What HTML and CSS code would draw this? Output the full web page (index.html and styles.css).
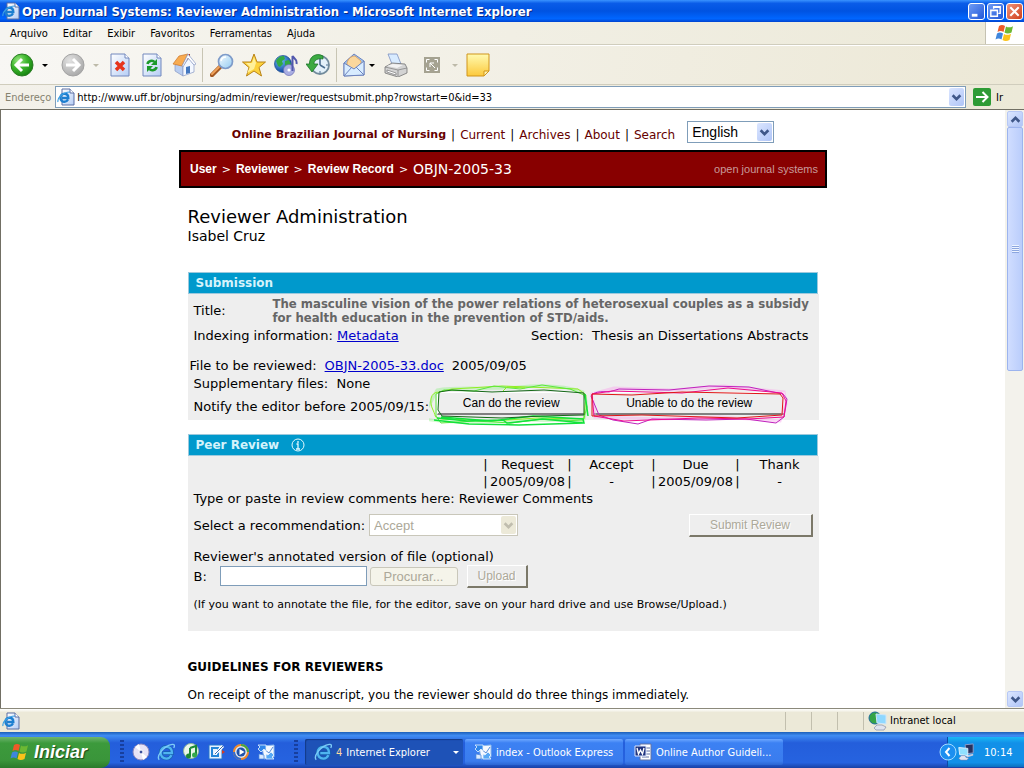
FILE: index.html
```html
<!DOCTYPE html>
<html lang="pt-BR">
<head>
    <meta charset="UTF-8">
    <meta name="viewport" content="width=device-width, initial-scale=1.0">
    <title>Open Journal Systems: Reviewer Administration</title>
    <link rel="stylesheet" href="styles.css">
</head>
<body>
    <!-- Shared icons -->
    <svg class="sprite" width="0" height="0" aria-hidden="true">
        <defs>
            <radialGradient id="gGreen" cx="35%" cy="30%" r="75%"><stop offset="0" stop-color="#9be884"/><stop offset=".5" stop-color="#3cb52c"/><stop offset="1" stop-color="#14800f"/></radialGradient>
            <radialGradient id="gGrey" cx="35%" cy="30%" r="75%"><stop offset="0" stop-color="#e2e2e2"/><stop offset="1" stop-color="#a8a8a8"/></radialGradient>
            <radialGradient id="gGlobe" cx="35%" cy="30%" r="75%"><stop offset="0" stop-color="#6ec3f5"/><stop offset="1" stop-color="#0b3b9b"/></radialGradient>
            <linearGradient id="gPage" x1="0" y1="0" x2="1" y2="1"><stop offset="0" stop-color="#ffffff"/><stop offset="1" stop-color="#b5cdf5"/></linearGradient>
            <linearGradient id="gNote" x1="0" y1="0" x2="0" y2="1"><stop offset="0" stop-color="#fffab0"/><stop offset="1" stop-color="#fcc93c"/></linearGradient>
            <linearGradient id="gLens" x1="0" y1="0" x2="1" y2="1"><stop offset="0" stop-color="#f6fcff"/><stop offset="1" stop-color="#93cbf2"/></linearGradient>
        </defs>
        <symbol id="flag" viewBox="0 0 20 20">
            <path d="M4 3c2-1.500 4-1.500 6 0L8.500 9c-2-1.300-4-1.300-6 0z" fill="#ee5a28"/>
            <path d="M11 3.500c2 1.200 4.500 1.200 7-.3L16.500 9.500c-2.500 1.300-5 1.300-7 0z" fill="#6cb833"/>
            <path d="M2 10.500c2-1.500 4-1.500 6 0L6.500 16.500c-2-1.300-4-1.300-6 0z" fill="#3f86dd"/>
            <path d="M9 11c2 1.200 4.500 1.200 7-.3L14.500 17c-2.500 1.300-5 1.300-7 0z" fill="#fbc31a"/>
        </symbol>
        <symbol id="e-logo" viewBox="0 0 20 20">
            <path d="M16 13.500c-1 2.500-3 3.800-5.600 3.800-4 0-6.400-2.900-6.400-6.500s2.600-6.500 6.400-6.500c4 0 6.200 2.800 6.200 6.900H7" fill="none" stroke="#155fae" stroke-width="4"/>
            <path d="M16 13.500c-1 2.500-3 3.800-5.600 3.800-4 0-6.400-2.900-6.400-6.500s2.600-6.500 6.400-6.500c4 0 6.200 2.800 6.200 6.900H7" fill="none" stroke="#4fb4f0" stroke-width="2.600"/>
            <path d="M2.500 18.500C-1 15 7 3 17 1.500c3-.4 2.800 2 1.500 4" fill="none" stroke="#7dcbf7" stroke-width="1.500"/>
        </symbol>
        <symbol id="ie-page" viewBox="0 0 18 18">
            <path d="M5 1h8l4 4v12H5z" fill="url(#gPage)" stroke="#5b6fa3"/>
            <path d="M13 1v4h4" fill="#fff" stroke="#5b6fa3"/>
            <path d="M11 11.500c-.8 1.500-2 2.300-3.500 2.300-2.500 0-4-1.700-4-4s1.500-4 3.800-4c2.500 0 4 1.700 4 4.200H5" fill="none" stroke="#1d7fd0" stroke-width="2.400"/>
            <path d="M1 14C0 10 6 4 13 4" fill="none" stroke="#3ba0e4" stroke-width="1.200"/>
        </symbol>
        <symbol id="outlook" viewBox="0 0 18 18">
            <path d="M5 3l12-1v12l-10 2z" fill="#f5f9ff" stroke="#8db9ec"/>
            <path d="M7 6l5 4 4-6" fill="none" stroke="#5b8fd8"/>
            <path d="M1 2h8v6l-2-2-3 3-3-3 2-2z" fill="#2f86ea" stroke="#e6f3ff" stroke-width=".8"/>
            <path d="M17 16H9v-5l2 1 3-3 3 3-2 2z" fill="#57a8f5" stroke="#e6f3ff" stroke-width=".8"/>
            <path d="M2 11l5 1v4H2z" fill="#dbeaff" stroke="#4a86d8" stroke-width=".7"/>
        </symbol>
        <symbol id="chevron" viewBox="0 0 10 10">
            <path d="M1.500 3L5 6.500 8.500 3" fill="none" stroke="currentColor" stroke-width="2.400"/>
        </symbol>
        <symbol id="chevron-up" viewBox="0 0 10 10">
            <path d="M1.500 7L5 3.500 8.500 7" fill="none" stroke="currentColor" stroke-width="2.400"/>
        </symbol>
        <symbol id="monitors" viewBox="0 0 20 20">
            <path d="M9 2l9-1v10l-8 1z" fill="#26315e" stroke="#93a3cf"/>
            <path d="M10 14l8-2v2l-7 2z" fill="#c3cbe0"/>
            <path d="M2 5l10 1v8L3 13z" fill="#8fe0ff" stroke="#e8f4ff"/>
            <path d="M5 14h4l1 2 3 1-2 2H4l-2-2z" fill="#dfe4f2" stroke="#7482ac" stroke-width=".6"/>
        </symbol>
    </svg>

    <header class="title-bar">
        <svg class="icon-18"><use href="#ie-page"/></svg>
        <h1>Open Journal Systems: Reviewer Administration - Microsoft Internet Explorer</h1>
        <button class="win-btn" aria-label="Minimizar"><svg viewBox="0 0 16 16"><path d="M3 12h6" stroke="#fff" stroke-width="3"/></svg></button>
        <button class="win-btn" aria-label="Restaurar"><svg viewBox="0 0 16 16"><path d="M6 5V3h7v7h-2M3 6.500h7V13H3zM3 7h7M6 3.500h7" fill="none" stroke="#fff" stroke-width="1.500"/></svg></button>
        <button class="win-btn close" aria-label="Fechar"><svg viewBox="0 0 16 16"><path d="M3.500 3.500l9 9M12.500 3.500l-9 9" stroke="#fff" stroke-width="2.200"/></svg></button>
    </header>

    <nav class="menu-bar">
        <button>Arquivo</button>
        <button>Editar</button>
        <button>Exibir</button>
        <button>Favoritos</button>
        <button>Ferramentas</button>
        <button>Ajuda</button>
        <span class="brand"><svg><use href="#flag"/></svg></span>
    </nav>

    <!-- Toolbar -->
    <div class="toolbar">
        <button class="tool" aria-label="Voltar"><svg viewBox="0 0 24 24"><circle cx="12" cy="12" r="11" fill="url(#gGreen)" stroke="#2c7d26"/><path d="M19 12H7M12 6l-6 6 6 6" fill="none" stroke="#fff" stroke-width="3"/></svg></button>
        <span class="drop"></span>
        <button class="tool forward" aria-label="Avançar" disabled><svg viewBox="0 0 24 24"><circle cx="12" cy="12" r="11" fill="url(#gGrey)" stroke="#a3a3a3"/><path d="M5 12h12M12 6l6 6-6 6" fill="none" stroke="#fff" stroke-width="3"/></svg></button>
        <span class="drop off"></span>
        <button class="tool stop" aria-label="Parar"><svg viewBox="0 0 24 24"><path d="M3 1h14l4 4v18H3z" fill="url(#gPage)" stroke="#7388bd"/><path d="M17 1v4h4" fill="#fff" stroke="#7388bd"/><path d="M8 9l8 8M16 9l-8 8" stroke="#e6341c" stroke-width="3.500"/></svg></button>
        <button class="tool" aria-label="Atualizar"><svg viewBox="0 0 24 24"><path d="M3 1h14l4 4v18H3z" fill="url(#gPage)" stroke="#7388bd"/><path d="M17 1v4h4" fill="#fff" stroke="#7388bd"/><path d="M7.500 11c.5-3 5-4.500 7-2" fill="none" stroke="#1c9a2b" stroke-width="2.600"/><path d="M17 6v6h-6z" fill="#1c9a2b"/><path d="M16.500 14c-.5 3-5 4.500-7 2" fill="none" stroke="#1c9a2b" stroke-width="2.600"/><path d="M7 19v-6h6z" fill="#1c9a2b"/></svg></button>
        <button class="tool" aria-label="Página inicial"><svg viewBox="0 0 24 24"><path d="M15 1h3v6h-3z" fill="#b33b2c"/><path d="M3 12l8-4v15l-8-5z" fill="#b9cdf0" stroke="#8798c4" stroke-width=".7"/><path d="M11 13l6-8 5 7v7l-11 4z" fill="#f4f8ff" stroke="#8798c4" stroke-width=".7"/><path d="M1 11L7 3l9-2-6 12z" fill="#f8ab50" stroke="#c9742a" stroke-width=".7"/><path d="M16 1l8 10-2 1-6-7-5 9-1-1z" fill="#fff" stroke="#8798c4" stroke-width=".7"/><path d="M14 14l4-1v7l-4 1z" fill="#4478c0"/></svg></button>
        <span class="sep"></span>
        <button class="tool" aria-label="Pesquisar"><svg viewBox="0 0 24 24"><path d="M2 22l8-8" stroke="#a45a25" stroke-width="4.500" stroke-linecap="round"/><path d="M2 21l7-7" stroke="#f1a35c" stroke-width="2" stroke-linecap="round"/><circle cx="15.500" cy="8.500" r="7" fill="url(#gLens)" stroke="#7e9bc9" stroke-width="1.700"/><path d="M11 8c.5-2.500 2.500-4 5-4" fill="none" stroke="#fff" stroke-width="1.500"/></svg></button>
        <button class="tool" aria-label="Favoritos"><svg viewBox="0 0 24 24"><path d="M12 1l3 8h8.500l-6.500 5.500L19.500 23 12 18l-7.500 5L7 14.500.5 9H9z" fill="#fdd23c" stroke="#b98318"/><path d="M12 4l2 6-2 6-7 4 3-6-4-4h6z" fill="#fff09a"/></svg></button>
        <button class="tool" aria-label="Mídia"><svg viewBox="0 0 24 24"><circle cx="9" cy="11" r="8.500" fill="url(#gGlobe)" stroke="#174a8f" stroke-width=".7"/><path d="M2 8c2-4 5-5 8-5l1 3-3 2 1 3-3 3-2-1zM11 8l4-1 2 4-3 5-3-2z" fill="#32a944"/><circle cx="15" cy="17" r="5.500" fill="#a9aee2" stroke="#6a6db3" stroke-width=".7"/><circle cx="15" cy="17" r="1.600" fill="#fff"/><path d="M18.500 18V3c1 2 5 3 4 8" fill="none" stroke="#5258ad" stroke-width="2"/></svg></button>
        <button class="tool" aria-label="Histórico"><svg viewBox="0 0 24 24"><circle cx="14" cy="12" r="9" fill="#e4f1fa" stroke="#728b9c" stroke-width="1.800"/><path d="M14 12V5M14 12l5 3" stroke="#4b6d8f" stroke-width="1.600"/><path d="M14 18v2M20 12h2" stroke="#4b6d8f"/><path d="M17 3C10-1 3 4 3.500 11H0l6 8 6-8H8c0-4 4-6 9-5z" fill="#3caa42" stroke="#1c7328" stroke-width=".8"/></svg></button>
        <span class="sep"></span>
        <button class="tool mail" aria-label="Correio"><svg viewBox="0 0 24 24"><path d="M2 10L12 1l10 7v14L2 23z" fill="#9dc6f4" stroke="#6d83bd"/><path d="M5 10c1-4 4-7 8-7l6 5v5l-7 4-7-5z" fill="#fbd79c" stroke="#d99b55" stroke-width=".8"/><path d="M2 10l10 6L22 8v14L2 23z" fill="#d8ecff" stroke="#6d83bd"/><path d="M2 23l8-9M22 22l-8-8" stroke="#6d83bd"/></svg></button>
        <span class="drop tight"></span>
        <button class="tool print" aria-label="Imprimir"><svg viewBox="0 0 24 24"><path d="M4 1h9l4 10H8z" fill="#d8ebff" stroke="#7c91c0" stroke-width=".8"/><path d="M1 14l7-4 13 1 2 4v5l-9 4-13-4z" fill="#d3d3d3" stroke="#747474" stroke-width=".8"/><path d="M1 14l13 3 9-2M14 17v6" fill="none" stroke="#858585" stroke-width=".8"/><path d="M3 13l6-2 10 1-6 3z" fill="#f3f3f3"/><path d="M3 17l9 3v2l-9-3z" fill="#fff" stroke="#666" stroke-width=".6"/></svg></button>
        <button class="tool resize" aria-label="Tamanho" disabled><svg viewBox="0 0 24 24"><path d="M4 4h16v16H4z" fill="#a5a291"/><path d="M6.500 9.500v-3h3M14.500 6.500h3v3M17.500 14.500v3h-3M9.500 17.500h-3v-3M10 14v-4h4M10 10l5 5" fill="none" stroke="#fff"/></svg></button>
        <span class="drop off"></span>
        <button class="tool" aria-label="Discussão"><svg viewBox="0 0 24 24"><path d="M1 1h22v17l-5 5H1z" fill="url(#gNote)" stroke="#d0951b"/><path d="M18 23v-5h5z" fill="#fff3b0" stroke="#d0951b"/></svg></button>
    </div>

    <form class="address-bar">
        <label for="url">Endereço</label>
        <div class="address-box">
            <svg class="icon-18"><use href="#ie-page"/></svg>
            <input id="url" type="text" value="http://www.uff.br/objnursing/admin/reviewer/requestsubmit.php?rowstart=0&amp;id=33">
            <button type="button" class="xp-arrow" aria-label="Abrir lista"><svg><use href="#chevron"/></svg></button>
        </div>
        <button type="button" class="go"><svg viewBox="0 0 18 18"><path d="M0 0h18v18H0z" fill="#2d9b35"/><path d="M3 9h11M9.500 4l5 5-5 5" fill="none" stroke="#fff" stroke-width="2"/></svg>Ir</button>
    </form>

    <div class="viewport">
        <main class="page">
            <nav class="site-nav">
                <a class="journal" href="#">Online Brazilian Journal of Nursing</a>
                <span>|</span><a href="#">Current</a>
                <span>|</span><a href="#">Archives</a>
                <span>|</span><a href="#">About</a>
                <span>|</span><a href="#">Search</a>
                <div class="select-box language">
                    <select aria-label="Language"><option>English</option></select>
                    <span class="xp-arrow"><svg><use href="#chevron"/></svg></span>
                </div>
            </nav>

            <div class="breadcrumb">
                <a href="#">User</a><span>&gt;</span>
                <a href="#">Reviewer</a><span>&gt;</span>
                <a href="#">Review Record</a><span>&gt;</span>
                <span class="current">OBJN-2005-33</span>
                <a class="ojs" href="#">open journal systems</a>
            </div>

            <div class="content">
                <h2>Reviewer Administration</h2>
                <p class="user-name">Isabel Cruz</p>

                <section class="panel submission">
                    <h3>Submission</h3>
                    <div class="panel-body">
                        <div class="row title-row">
                            <span>Title:</span>
                            <strong>The masculine vision of the power relations of heterosexual couples as a subsidy for health education in the prevention of STD/aids.</strong>
                        </div>
                        <div class="row index-row">
                            <span>Indexing information: <a href="#">Metadata</a></span>
                            <span>Section:&nbsp; Thesis an Dissertations Abstracts</span>
                        </div>
                        <div class="row file-row">
                            <span>File to be reviewed:</span>
                            <a href="#">OBJN-2005-33.doc</a>
                            <span>2005/09/05</span>
                        </div>
                        <div class="row">Supplementary files:&nbsp; None</div>
                        <div class="row notify-row">
                            <span>Notify the editor before 2005/09/15:</span>
                            <div class="marked can">
                                <button>Can do the review</button>
                                <svg class="scribble" viewBox="0 0 160 42" preserveAspectRatio="none" fill="none">
                                    <path d="M8 6C30 2 60 6 90 3s50 0 64 5c5 8 3 18 1 27-30 3-60 0-90 2s-50 2-76-3C2 24 4 12 8 6z" stroke="#7fef6f" stroke-width="3" opacity=".35"/>
                                    <path d="M10 8C1 8 0 18 4 26s0 8 10 9l50 2 44-3 47 1 2-24-8-6-50-2-26-1-50 3z" stroke="#8fee22"/>
                                    <path d="M7 10l8-4 30 1 20-5 26 3 22-4 28 4 14 6 3 12-4 14-40-2-32 4-36-2-34 2-5-7z" stroke="#5be83c"/>
                                    <path d="M8 34l30 3 36-1 4 3 35-4 42 4-1-4-50-3-42 5-50-4M156 10l3 22M5 36l35 4 50 1 65-2" stroke="#12e23b" stroke-width="1.500"/>
                                    <path d="M10 8l-1 18 4 6 60 2 40-2 42-1V9l-40-3-52 2-40-2z" stroke="#156818"/>
                                    <path d="M74 7l4-4 18 1" stroke="#8fee22"/>
                                </svg>
                            </div>
                            <div class="marked unable">
                                <button>Unable to do the review</button>
                                <svg class="scribble" viewBox="0 0 200 42" preserveAspectRatio="none" fill="none">
                                    <path d="M3 10L25 4l60 2 50-4 60 6 2 12-6 17-60-4-60 2-65-2z" stroke="#f8a5ec" stroke-width="3" opacity=".45"/>
                                    <path d="M2 12c2-4 10-5 18-4L30 5l50 1 40-4 40 1 34 7 4 5-3 18-8 6-30-4-40 1-54-1-14 5-25-4-14-5z" stroke="#bf22bd"/>
                                    <path d="M3 10l20-3 70 2 46-5 54 5 4 8-2 16-36 2-50-1-74 3-30-5z" stroke="#f00a8f"/>
                                    <path d="M3 10l40 1 50-3 98 2 3 4-1 17-45 3-95-3-50 1z" stroke="#e01616"/>
                                </svg>
                            </div>
                        </div>
                    </div>
                </section>

                <section class="panel review">
                    <h3>Peer Review <svg class="info" viewBox="0 0 14 14"><circle cx="7" cy="7" r="6" fill="none" stroke="#e3f9ff"/><path d="M7 3v2M5.500 6H7v5M5 11h4" fill="none" stroke="#e3f9ff" stroke-width="1.300"/></svg></h3>
                    <div class="panel-body">
                        <table class="dates">
                            <tr><td>|</td><th>Request</th><td>|</td><th>Accept</th><td>|</td><th>Due</th><td>|</td><th>Thank</th></tr>
                            <tr><td>|</td><td>2005/09/08</td><td>|</td><td>-</td><td>|</td><td>2005/09/08</td><td>|</td><td>-</td></tr>
                        </table>
                        <p class="comments">Type or paste in review comments here: Reviewer Comments</p>
                        <div class="row recommend-row">
                            <label for="recommendation">Select a recommendation:</label>
                            <div class="select-box disabled">
                                <select id="recommendation" disabled><option>Accept</option></select>
                                <span class="xp-arrow"><svg><use href="#chevron"/></svg></span>
                            </div>
                            <button class="classic submit" disabled>Submit Review</button>
                        </div>
                        <p class="annotated">Reviewer's annotated version of file (optional)</p>
                        <div class="row upload-row">
                            <label for="file">B:</label>
                            <input id="file" type="text">
                            <button class="browse" disabled>Procurar...</button>
                            <button class="classic upload" disabled>Upload</button>
                        </div>
                        <p class="hint">(If you want to annotate the file, for the editor, save on your hard drive and use Browse/Upload.)</p>
                    </div>
                </section>

                <h4>GUIDELINES FOR REVIEWERS</h4>
                <p class="guideline">On receipt of the manuscript, you the reviewer should do three things immediately.</p>
            </div>
        </main>

        <div class="scrollbar">
            <button class="xp-arrow" aria-label="Rolar para cima"><svg><use href="#chevron-up"/></svg></button>
            <div class="thumb"><i></i></div>
            <button class="xp-arrow" aria-label="Rolar para baixo"><svg><use href="#chevron"/></svg></button>
        </div>
    </div>

    <div class="status-bar">
        <svg class="icon-18"><use href="#ie-page"/></svg>
        <span class="cell first"></span>
        <span class="cell"></span>
        <span class="cell"></span>
        <span class="cell"></span>
        <span class="zone">
            <svg viewBox="0 0 20 20"><circle cx="7" cy="7" r="6" fill="#35a348" stroke="#1d6a9c"/><path d="M8 3l10 1v9l-9-1z" fill="#8fd8ff" stroke="#cfe6f7"/><path d="M9 14h5l4 2-2 3H8l-2-2z" fill="#dfe3ee" stroke="#77809c" stroke-width=".6"/></svg>
            Intranet local
        </span>
    </div>

    <!-- Taskbar -->
    <footer class="taskbar">
        <button class="start"><svg><use href="#flag"/></svg>Iniciar</button>
        <i class="grip"></i>
        <div class="quick">
            <svg viewBox="0 0 18 18"><circle cx="9" cy="9" r="8" fill="#e6e2f6" stroke="#8d88bd"/><path d="M9 9L3 4l4-3zM9 9l6 5-4 3z" fill="#fff"/><circle cx="9" cy="9" r="2" fill="#3a4f9c" stroke="#fff"/></svg>
            <svg><use href="#e-logo"/></svg>
            <svg viewBox="0 0 18 18"><circle cx="9" cy="8" r="7.500" fill="#eaf6ea" stroke="#8fb79b"/><path d="M8 5l6-2v9M8 5v8" fill="none" stroke="#1b8a36" stroke-width="2"/><circle cx="6.500" cy="13" r="2.500" fill="#1b8a36"/><circle cx="12.500" cy="12" r="2.500" fill="#35a84c"/></svg>
            <svg viewBox="0 0 18 18"><path d="M2 2h13v14H2z" fill="#e6f2ff" stroke="#2676c9"/><path d="M5 5h6v8H5z" fill="none" stroke="#2386d8" stroke-width="2"/><path d="M8 11l8-8" stroke="#fff" stroke-width="3"/><path d="M8 11l8-8" stroke="#376bb0"/><path d="M15 7l3 2-3 2z" fill="#d83a20"/></svg>
            <svg viewBox="0 0 18 18"><circle cx="9" cy="9" r="7" fill="#dce9fb" stroke="#f08a2c" stroke-width="2"/><path d="M9 2a7 7 0 0 1 7 7" fill="none" stroke="#45a845" stroke-width="2"/><path d="M2 9a7 7 0 0 0 7 7" fill="none" stroke="#2f6ad0" stroke-width="2"/><circle cx="9" cy="9" r="4.500" fill="#1f51a8"/><path d="M7.500 6v6l5-3z" fill="#fff"/></svg>
            <svg><use href="#outlook"/></svg>
        </div>
        <i class="grip"></i>
        <div class="tasks">
            <button class="task active"><svg><use href="#e-logo"/></svg><b>4</b>Internet Explorer<span class="drop"></span></button>
            <button class="task"><svg><use href="#outlook"/></svg>index - Outlook Express</button>
            <button class="task"><svg viewBox="0 0 18 18"><path d="M6 1h11v16H6z" fill="#fff" stroke="#6172a5"/><path d="M12 5h4M12 8h4M12 11h4M8 14h7" stroke="#6172a5"/><path d="M1 3h11v10H1z" fill="#20347e" stroke="#dbe5ff"/><path d="M3 5l1.500 6L6.500 7l2 4L10 5" fill="none" stroke="#fff" stroke-width="1.400"/></svg>Online Author Guideli...</button>
        </div>
        <div class="tray">
            <button class="tray-toggle" aria-label="Mostrar ícones"><svg viewBox="0 0 18 18"><circle cx="9" cy="9" r="8" fill="#1c8ff0" stroke="#a4dcff"/><path d="M10.500 5L7 9l3.500 4" fill="none" stroke="#fff" stroke-width="2"/></svg></button>
            <svg class="net"><use href="#monitors"/></svg>
            <span>10:14</span>
        </div>
    </footer>
</body>
</html>
```
FILE: styles.css
```css
* {
    margin: 0;
    padding: 0;
    box-sizing: border-box;
}

body {
    display: flex;
    flex-direction: column;
    height: 100vh;
    overflow: hidden;
    background: #fff;
    color: #000;
    font-family: "DejaVu Sans", Verdana, sans-serif;
    font-size: 13px;
}

button {
    border: none;
    background: none;
    color: inherit;
    font: inherit;
}

svg {
    display: block;
    flex: none;
}

.sprite {
    position: absolute;
}

.icon-18 {
    width: 18px;
    height: 18px;
}

.title-bar,
.menu-bar,
.toolbar,
.address-bar,
.status-bar,
.taskbar {
    display: flex;
    align-items: center;
    flex: none;
    font-family: "DejaVu Sans Condensed", Tahoma, sans-serif;
    font-size: 11px;
}

/* Title bar */
.title-bar {
    height: 22px;
    padding: 0 1px 0 2px;
    gap: 2px;
    background: linear-gradient(#3a93ff, #0a5ce8 15%, #0053e1 50%, #0066ff 85%, #0043cf);
    color: #fff;
}

.title-bar h1 {
    flex: 1;
    font-size: 13px;
    text-shadow: 1px 1px #0a2a86;
    white-space: nowrap;
}

.win-btn {
    width: 17px;
    height: 17px;
    border: 1px solid #fff;
    border-radius: 3px;
    background: linear-gradient(135deg, #6f9cf5, #2157d8);
}

.win-btn.close {
    background: linear-gradient(135deg, #f0937a, #cf3f1b);
}

/* Menu bar */
.menu-bar {
    height: 23px;
    padding-left: 10px;
    gap: 15px;
    background: linear-gradient(90deg, #f6f5f0, #ece9d8);
    border-bottom: 1px solid #d0cdbd;
}

.brand {
    display: flex;
    align-items: center;
    justify-content: center;
    width: 39px;
    height: 22px;
    margin-left: auto;
    background: #fff;
    border-left: 1px solid #c5c2b2;
}

.brand svg {
    width: 20px;
    height: 20px;
}

/* Toolbar */
.toolbar {
    height: 40px;
    padding-left: 6px;
    background: linear-gradient(100deg, #f8f7f4, #ece8d6);
    border-top: 1px solid #fff;
    border-bottom: 1px solid #d0cdbd;
}

.tool {
    display: flex;
    justify-content: center;
    width: 32px;
}

.tool svg {
    width: 24px;
    height: 24px;
}

.tool.forward {
    margin-left: 5px;
}

.tool.stop {
    margin-left: 1px;
}

.tool.mail {
    width: 28px;
}

.tool.print {
    margin: 0 4px;
}

.drop {
    width: 14px;
}

.drop::before {
    content: "";
    display: block;
    width: 0;
    margin: 0 auto;
    border: 3px solid transparent;
    border-top-color: #000;
    border-bottom: none;
}

.drop.off::before {
    border-top-color: #bdbaa9;
}

.drop.tight {
    width: 8px;
}

.sep {
    width: 1px;
    height: 34px;
    margin: 0 3px 0 2px;
    background: #c8c5b4;
}

/* Address bar */
.address-bar {
    height: 24px;
    padding: 0 2px 0 5px;
    background: linear-gradient(90deg, #f3f1ea, #ece9d8);
}

.address-bar label {
    color: #85826f;
}

.address-box {
    display: flex;
    align-items: center;
    flex: 1;
    height: 22px;
    margin: 0 7px 0 4px;
    padding: 0 1px;
    background: #fff;
    border: 1px solid #7f9db9;
}

.address-box input {
    flex: 1;
    padding-left: 2px;
    border: none;
    outline: none;
    font: inherit;
}

.xp-arrow {
    display: flex;
    align-items: center;
    justify-content: center;
    width: 15px;
    height: 18px;
    border-radius: 2px;
    background: linear-gradient(135deg, #dbe6ff, #b0c5f7);
    color: #3f5788;
}

.xp-arrow svg {
    width: 11px;
    height: 11px;
}

.go {
    display: flex;
    align-items: center;
    gap: 5px;
    width: 49px;
}

.go svg {
    width: 18px;
    height: 18px;
    border-radius: 2px;
}

/* Viewport */
.viewport {
    display: flex;
    flex: 1;
    min-height: 0;
    border-top: 1px solid #716f64;
    border-left: 1px solid #716f64;
}

.page {
    flex: 1;
    overflow: hidden;
}

.page a {
    color: #0000cc;
}

.site-nav {
    display: flex;
    align-items: flex-end;
    justify-content: center;
    gap: 5px;
    padding: 11px 0 6px;
    font-size: 12px;
    line-height: 18px;
}

.site-nav a {
    color: #660000;
    text-decoration: none;
}

.site-nav .journal {
    font-size: 11px;
    font-weight: bold;
}

.select-box {
    position: relative;
    width: 149px;
    height: 22px;
}

.select-box.language {
    width: 87px;
    margin-left: 7px;
}

.site-nav .language {
    margin-bottom: 1px;
}

.select-box select {
    appearance: none;
    width: 100%;
    height: 100%;
    padding-left: 4px;
    border: 1px solid #7f9db9;
    border-radius: 0;
    background: #fff;
    color: #000;
    font-family: "Liberation Sans", Arial, sans-serif;
    font-size: 14px;
}

.select-box .xp-arrow {
    position: absolute;
    top: 2px;
    right: 2px;
    pointer-events: none;
}

.select-box.disabled select {
    border-color: #c9c7ba;
    color: #aca899;
    font-size: 13px;
    opacity: 1;
}

.select-box.disabled .xp-arrow {
    background: #ece9d8;
    color: #c0bdae;
}

.breadcrumb {
    display: flex;
    align-items: center;
    gap: 5px;
    max-width: 648px;
    height: 38px;
    margin: 0 auto;
    padding: 0 7px 0 9px;
    border: 2px solid #000;
    background: #880000;
    color: #fff;
    font-size: 11px;
}

.breadcrumb a {
    color: #fff;
    font-family: "Liberation Sans", Arial, sans-serif;
    font-size: 12px;
    font-weight: bold;
    text-decoration: none;
}

.breadcrumb .current {
    font-size: 14px;
}

.breadcrumb .ojs {
    margin-left: auto;
    color: #c89a9a;
    font-size: 11px;
    font-weight: normal;
}

.content {
    max-width: 631px;
    margin: 0 auto;
}

.content h2 {
    padding-top: 18px;
    font-size: 18px;
    font-weight: normal;
    line-height: 22px;
}

.user-name {
    margin-bottom: 28px;
    font-size: 14px;
    line-height: 16px;
}

/* Panels */
.panel {
    margin-bottom: 14px;
}

.panel h3 {
    display: flex;
    align-items: center;
    gap: 12px;
    height: 22px;
    margin-right: 1px;
    padding-left: 7px;
    border: 1px solid #9cc9dd;
    background: #0099cc;
    color: #d5f3fb;
    font-size: 12px;
}

.info {
    width: 14px;
    height: 14px;
}

.panel-body {
    padding: 0 4px 0 6px;
    background: #eee;
}

.row {
    display: flex;
    align-items: center;
    min-height: 18px;
}

.title-row {
    height: 32px;
    padding-top: 2px;
    line-height: 14px;
}

.title-row span {
    width: 79px;
}

.title-row strong {
    flex: 1;
    color: #666;
    font-family: "DejaVu Sans Condensed", Verdana, sans-serif;
}

.index-row {
    justify-content: space-between;
    padding-right: 6px;
}

.file-row {
    gap: 8px;
    margin: 12px 0 0 -4px;
}

.notify-row {
    height: 28px;
    gap: 8px;
}

.marked {
    position: relative;
    margin-bottom: 6px;
}

.marked button {
    width: 148px;
    height: 23px;
    border: 1px solid #fff;
    border-bottom: 2px solid #808080;
    background: #eee;
    font-family: "Liberation Sans", Arial, sans-serif;
    font-size: 12px;
}

.marked.unable button {
    width: 192px;
}

.scribble {
    position: absolute;
    top: -8px;
    left: -8px;
    width: 160px;
    height: 42px;
    pointer-events: none;
}

.unable .scribble {
    left: -4px;
    width: 200px;
}

.dates {
    margin: 0 -4px 0 auto;
    border-collapse: collapse;
}

.dates td,
.dates th {
    width: 6px;
    height: 17px;
    font-weight: normal;
    text-align: center;
}

.dates th {
    width: 78px;
}

.comments {
    line-height: 18px;
}

.recommend-row {
    height: 34px;
    gap: 4px;
}

.classic {
    border: 1px solid #fff;
    border-right: 2px solid #7b7869;
    border-bottom: 2px solid #7b7869;
    height: 23px;
    color: #aca899;
    font-family: "Liberation Sans", Arial, sans-serif;
    font-size: 12px;
    text-shadow: 1px 1px #fff;
}

.submit {
    width: 124px;
    margin: 0 2px 0 auto;
}

.annotated {
    padding-top: 6px;
    line-height: 18px;
}

.upload-row {
    height: 20px;
}

.upload-row label {
    width: 26px;
}

.upload-row input {
    width: 147px;
    height: 20px;
    border: 1px solid #7f9db9;
    background: #fff;
}

.browse {
    width: 88px;
    height: 19px;
    margin: 0 9px 0 3px;
    border: 1px solid #c9c7ba;
    border-radius: 3px;
    background: #f5f4ea;
    color: #aca899;
    font-family: "Liberation Sans", Arial, sans-serif;
    font-size: 13px;
}

.upload {
    width: 61px;
}

.hint {
    padding: 10px 0 17px;
    font-size: 11px;
    line-height: 18px;
}

.content h4 {
    padding-top: 13px;
    font-size: 12px;
    line-height: 18px;
}

.guideline {
    padding-top: 10px;
    font-size: 12px;
    line-height: 18px;
}

/* Scrollbar */
.scrollbar {
    display: flex;
    flex-direction: column;
    width: 19px;
    padding: 1px 1px 1px 2px;
    background: #f3f2ec;
}

.scrollbar .xp-arrow {
    width: 16px;
    height: 16px;
    border: 1px solid #b7c8f5;
}

.thumb {
    display: flex;
    align-items: center;
    justify-content: center;
    height: 41%;
    margin-bottom: auto;
    border: 1px solid #9cb4ee;
    border-radius: 2px;
    background: linear-gradient(90deg, #d0ddff, #bacdfb);
}

.thumb i {
    width: 7px;
    height: 8px;
    background: repeating-linear-gradient(#eef4ff 0 1px, #8ca6df 1px 2px);
}

/* Status bar */
.status-bar {
    height: 24px;
    padding-left: 2px;
    border-top: 1px solid #8b897b;
    background: linear-gradient(#fff, #ece9d8 15%);
}

.cell {
    width: 26px;
    height: 18px;
    border-right: 1px solid #c2bfae;
}

.cell.first {
    flex: 1;
}

.zone {
    display: flex;
    align-items: center;
    gap: 2px;
    width: 160px;
    height: 18px;
    padding-left: 4px;
}

.zone svg {
    width: 20px;
    height: 20px;
}

/* Taskbar */
.taskbar {
    height: 36px;
    padding-top: 4px;
    background: linear-gradient(#1c5fb8, #3f8cf3 10%, #245edb 30%, #2663e0 85%, #1941a5);
    color: #fff;
}

.start {
    display: flex;
    align-items: center;
    gap: 4px;
    width: 110px;
    height: 31px;
    padding-left: 10px;
    border-radius: 0 9px 9px 0;
    background: linear-gradient(#6fb56f, #3c9a3c 20%, #3a953a 75%, #2a7a2a);
    font-family: "Liberation Sans", Arial, sans-serif;
    font-size: 18px;
    font-style: italic;
    font-weight: bold;
    text-shadow: 1px 1px 1px #1b4a1b;
}

.start svg {
    width: 20px;
    height: 20px;
}

.grip {
    width: 4px;
    height: 24px;
    margin: 0 8px 0 10px;
    background: repeating-linear-gradient(#173f9e 0 2px, transparent 2px 4px);
}

.quick {
    display: flex;
    gap: 7px;
}

.quick svg {
    width: 18px;
    height: 18px;
}

.quick + .grip {
    margin: 0 7px 0 19px;
}

.tasks {
    display: flex;
    flex: 1;
    gap: 2px;
    min-width: 0;
}

.task {
    display: flex;
    align-items: center;
    gap: 4px;
    flex: 0 1 158px;
    height: 26px;
    padding: 0 4px 0 9px;
    border-radius: 2px;
    background: linear-gradient(#6ea8ff, #3c81f3 15%, #3a7cee 85%, #2c66d2);
    white-space: nowrap;
}

.task.active {
    background: #1e52b7;
    box-shadow: inset 1px 1px 1px #123a88;
}

.task svg {
    width: 18px;
    height: 18px;
}

.task b {
    color: #ffd8a0;
    font-weight: normal;
}

.task .drop {
    width: 6px;
    margin-left: auto;
}

.task .drop::before {
    border-top-color: #fff;
}

.tray {
    display: flex;
    align-items: center;
    width: 77px;
    height: 30px;
    border-left: 1px solid #0b4ba5;
    background: linear-gradient(#19b9f5, #1290e8 20%, #1290e8 85%, #0d6fbd);
}

.tray-toggle {
    margin-left: -9px;
}

.tray-toggle svg,
.tray .net {
    width: 18px;
    height: 18px;
}

.tray .net {
    margin-right: 9px;
}
```
